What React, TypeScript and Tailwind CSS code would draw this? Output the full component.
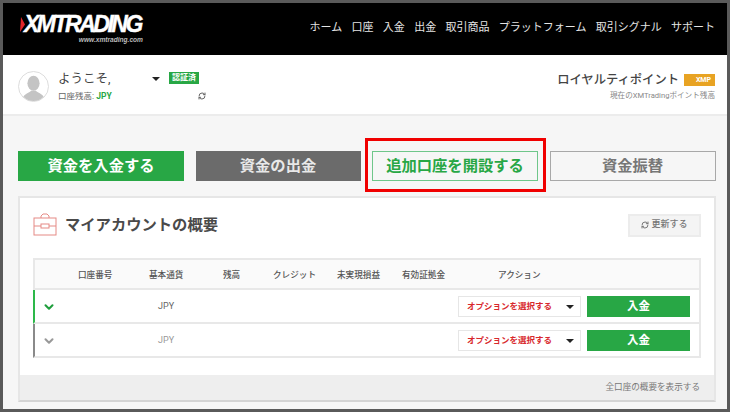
import React from "react";
import { RefreshCw, ChevronDown } from "lucide-react";

const JP = "font-['Roboto','Noto_Sans_CJK_JP','Liberation_Sans',sans-serif]";

const Caret = () => <span className="block w-0 h-0 border-l-[4px] border-r-[4px] border-t-[4px] border-l-transparent border-r-transparent border-t-[#222]" />;

const navItems = ["ホーム", "口座", "入金", "出金", "取引商品", "プラットフォーム", "取引シグナル", "サポート"];
const headers: [string, string][] = [
  ["口座番号", "w-[114px] pl-[43px]"],
  ["基本通貨", "w-[74px]"],
  ["残高", "w-[50px]"],
  ["クレジット", "w-[64px]"],
  ["未実現損益", "w-[65px]"],
  ["有効証拠金", "w-[96px]"],
  ["アクション", "w-[60px]"],
];

function Row({ green }: { green: boolean }) {
  return (
    <div className={`h-[34px] flex items-center border-b-2 border-[#e8e8e8] border-l-2 ${green ? "border-l-[#2db84a]" : "border-l-[#8a8a8a]"} bg-white`}>
      <ChevronDown size={14} strokeWidth={3.5} className={`ml-[7px] mt-[1px] ${green ? "text-[#1f9e3c]" : "text-[#999]"}`} />
      <span className={`ml-[102px] mt-[2px] text-[9px] ${green ? "text-[#666]" : "text-[#999]"}`}>JPY</span>
      <div className="ml-auto mr-[9px] flex items-center gap-[6px] mt-[1px]">
        <div className="w-[123px] h-[21px] border border-[#e6e6e6] bg-white flex items-center pl-[8px] pr-[6px] justify-between">
          <span className="text-[8.5px] font-bold text-[#d8282c] whitespace-nowrap">オプションを選択する</span>
          <Caret />
        </div>
        <div className="w-[103px] h-[21px] bg-[#28a745] text-white text-[11.5px] font-bold flex items-center justify-center">入金</div>
      </div>
    </div>
  );
}

export default function App() {
  return (
    <div className={`w-[730px] h-[412px] overflow-hidden relative border-[3px] border-[#5a5a5a] bg-[#f6f6f6] ${JP}`}>
      <header className="h-[52px] bg-black flex items-center justify-between pl-[17px] pr-[12px]">
        <div className="flex flex-col w-[123px] -mt-[3px]">
          <div className="flex items-center">
            <svg width="5" height="15" viewBox="0 0 5 15" className="mr-[-1px]"><path d="M1 0 L5 7.5 L0 15 Z" fill="#e0252b" /></svg>
            <span className="font-['Liberation_Sans',sans-serif] italic font-bold text-white text-[23px] leading-[23px] tracking-[-2.5px] [-webkit-text-stroke:0.4px_white]">XMTRADING</span>
          </div>
          <span className="self-end font-['Liberation_Sans',sans-serif] italic font-bold text-[#bbb] text-[6.6px] leading-[7px]">www.xmtrading.com</span>
        </div>
        <nav className="flex items-center gap-[9.3px] text-[11px] text-[#e4e4e4] whitespace-nowrap -mt-[2px]">
          {navItems.map((n) => <span key={n}>{n}</span>)}
        </nav>
      </header>

      <section className="h-[61px] bg-white border-b-2 border-[#ececec] flex items-start justify-between pl-[15px] pr-[12px] pt-[16px]">
        <div className="flex items-start">
          <div className="w-[31px] h-[31px] rounded-full border border-[#ddd] bg-white overflow-hidden">
            <svg viewBox="0 0 31 31" className="w-full h-full">
              <ellipse cx="15.5" cy="12" rx="6.5" ry="8" fill="#c4c4c4" />
              <path d="M3 31 C4 23 10 23 13 20 L18 20 C21 23 27 23 28 31 Z" fill="#c4c4c4" />
            </svg>
          </div>
          <div className="ml-[9px] w-[150px]">
            <div className="flex items-center h-[16px]">
              <span className="text-[12.5px] text-[#444] leading-none w-[94px] shrink-0">ようこそ,</span>
              <Caret />
              <span className="ml-[9px] mt-[-2px] bg-[#28a745] text-white text-[8px] font-bold leading-[12px] h-[12px] px-[3px] whitespace-nowrap">認証済</span>
            </div>
            <div className="flex items-center mt-[3px] h-[12px] text-[8.5px] text-[#666] leading-none whitespace-nowrap">
              <span className="w-[140px] shrink-0">口座残高: <span className="text-[#28a745] font-bold">JPY</span></span>
              <RefreshCw size={8} strokeWidth={3} className="shrink-0 text-[#666]" />
            </div>
          </div>
        </div>
        <div className="flex flex-col items-end">
          <div className="flex items-center h-[18px]">
            <span className="text-[12.3px] text-[#444] leading-none font-medium">ロイヤルティポイント</span>
            <span className="ml-[5px] w-[31px] h-[12px] bg-[#e8a323] text-white text-[7px] font-bold leading-[12px] text-right pr-[4px]">XMP</span>
          </div>
          <span className="mt-[2px] text-[7.6px] text-[#888] leading-[10px]">現在のXMTradingポイント残高</span>
        </div>
      </section>

      <div className="pl-[15px] pr-[10px] pt-[35px]">
        <div className="flex gap-[11.5px] h-[30px]">
          <div className="w-[166px] shrink-0 bg-[#28a745] text-white text-[15.3px] font-bold flex items-center justify-center">資金を入金する</div>
          <div className="w-[165px] shrink-0 bg-[#6b6b6b] text-[#e8e8e8] text-[15.3px] font-bold flex items-center justify-center">資金の出金</div>
          <div className="w-[166px] shrink-0 border border-[#6fc68a] bg-[#f6f6f6] text-[#28a745] text-[15.3px] font-bold flex items-center justify-center">追加口座を開設する</div>
          <div className="w-[166px] shrink-0 border border-[#a8a8a8] bg-[#f6f6f6] text-[#777] text-[15.3px] font-bold flex items-center justify-center">資金振替</div>
        </div>

        <div className="mt-[15px] w-[698px] h-[206px] bg-white border-2 border-[#e6e6e6] border-b-[#d4d4d4] flex flex-col">
          <div className="flex items-center justify-between h-[60px] pb-[6px] pl-[13px] pr-[13px] shrink-0">
            <div className="flex items-center gap-[8px]">
              <svg width="24" height="24" viewBox="0 0 24 24" fill="none" stroke="#e58a85" strokeWidth="1">
                <rect x="1" y="5" width="22" height="17" />
                <path d="M1 13 H8 M16 13 H23 M8 5 V3 L10 1 H14 L16 3 V5" />
                <rect x="8" y="11" width="8" height="4" />
              </svg>
              <span className="text-[15.3px] font-bold text-[#4a4a4a] whitespace-nowrap">マイアカウントの概要</span>
            </div>
            <div className="w-[73px] h-[23px] border-2 border-[#ececec] bg-[#f4f4f4] flex items-center justify-center gap-[2px] text-[9px] text-[#777] font-medium">
              <RefreshCw size={8} strokeWidth={3} />
              <span>更新する</span>
            </div>
          </div>

          <div className="mx-[13px] border-t-2 border-r-2 border-[#e8e8e8] shrink-0">
            <div className="h-[30px] flex items-center bg-[#fafafa] border-l-2 border-b-2 border-[#e8e8e8] text-[8.6px] text-[#555] font-medium whitespace-nowrap">
              {headers.map(([h, w]) => <span key={h} className={`${w} shrink-0 mt-[2px]`}>{h}</span>)}
            </div>
            <Row green />
            <Row green={false} />
          </div>

          <div className="mt-auto h-[25px] bg-[#eeeeee] flex items-center justify-end pr-[14px] text-[8.6px] text-[#777]">
            全口座の概要を表示する
          </div>
        </div>
      </div>

      <div className="absolute left-[362px] top-[135px] w-[181px] h-[54px] border-[3px] border-[#f00000]" />
    </div>
  );
}
